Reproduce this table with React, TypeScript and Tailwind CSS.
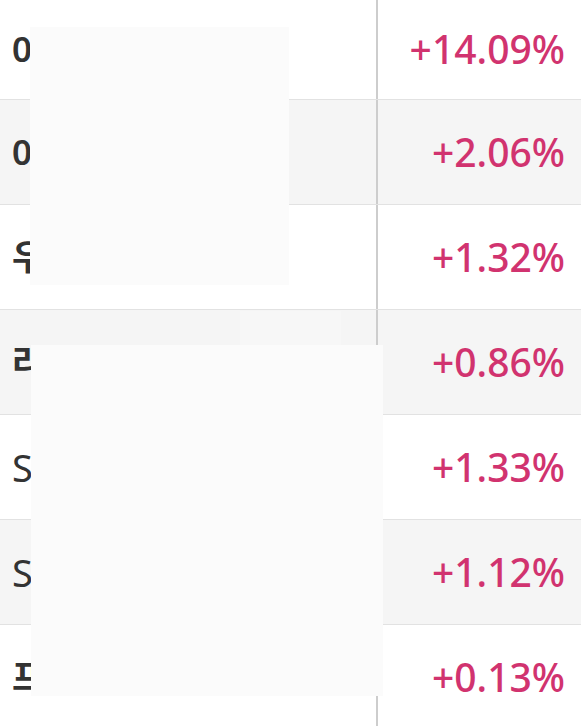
import React from "react";

const rows = [
  { name: "0", change: "+14.09%", bold: true },
  { name: "0", change: "+2.06%", bold: true },
  { name: "우", change: "+1.32%", bold: true },
  { name: "라", change: "+0.86%", bold: true },
  { name: "S", change: "+1.33%", bold: false },
  { name: "S", change: "+1.12%", bold: false },
  { name: "프", change: "+0.13%", bold: true },
];

export default function App() {
  return (
    <div
      className="relative w-[581px] h-[726px] overflow-hidden bg-white"
      style={{ fontFamily: '"Noto Sans", "Noto Sans CJK KR", sans-serif' }}
    >
      <div className="flex flex-col">
        {rows.map((r, i) => (
          <div
            key={i}
            className={`flex border-b border-[#e2e2e2] ${i === 0 ? "h-[100px]" : "h-[105px]"} ${
              i % 2 === 1 ? "bg-[#f5f5f5]" : "bg-white"
            }`}
          >
            <div
              className={`w-[376px] flex items-center pl-3 text-[#333] ${
                r.bold ? "text-[35px] font-semibold" : "text-[38px] font-normal"
              }`}
            >
              {r.name}
            </div>
            <div className="flex-1 flex items-center justify-end pr-4 border-l-2 border-[#cdcdcd] text-[39px] font-medium text-[#d1336f]">
              {r.change}
            </div>
          </div>
        ))}
      </div>

      {/* redaction overlays */}
      <div className="absolute left-[30px] top-[27px] w-[259px] h-[258px] bg-[#fbfbfb]" />
      <div className="absolute left-[240px] top-[311px] w-[101px] h-[34px] bg-[#f7f7f7]" />
      <div className="absolute left-[31px] top-[345px] w-[352px] h-[351px] bg-[#fbfbfb]" />
    </div>
  );
}
